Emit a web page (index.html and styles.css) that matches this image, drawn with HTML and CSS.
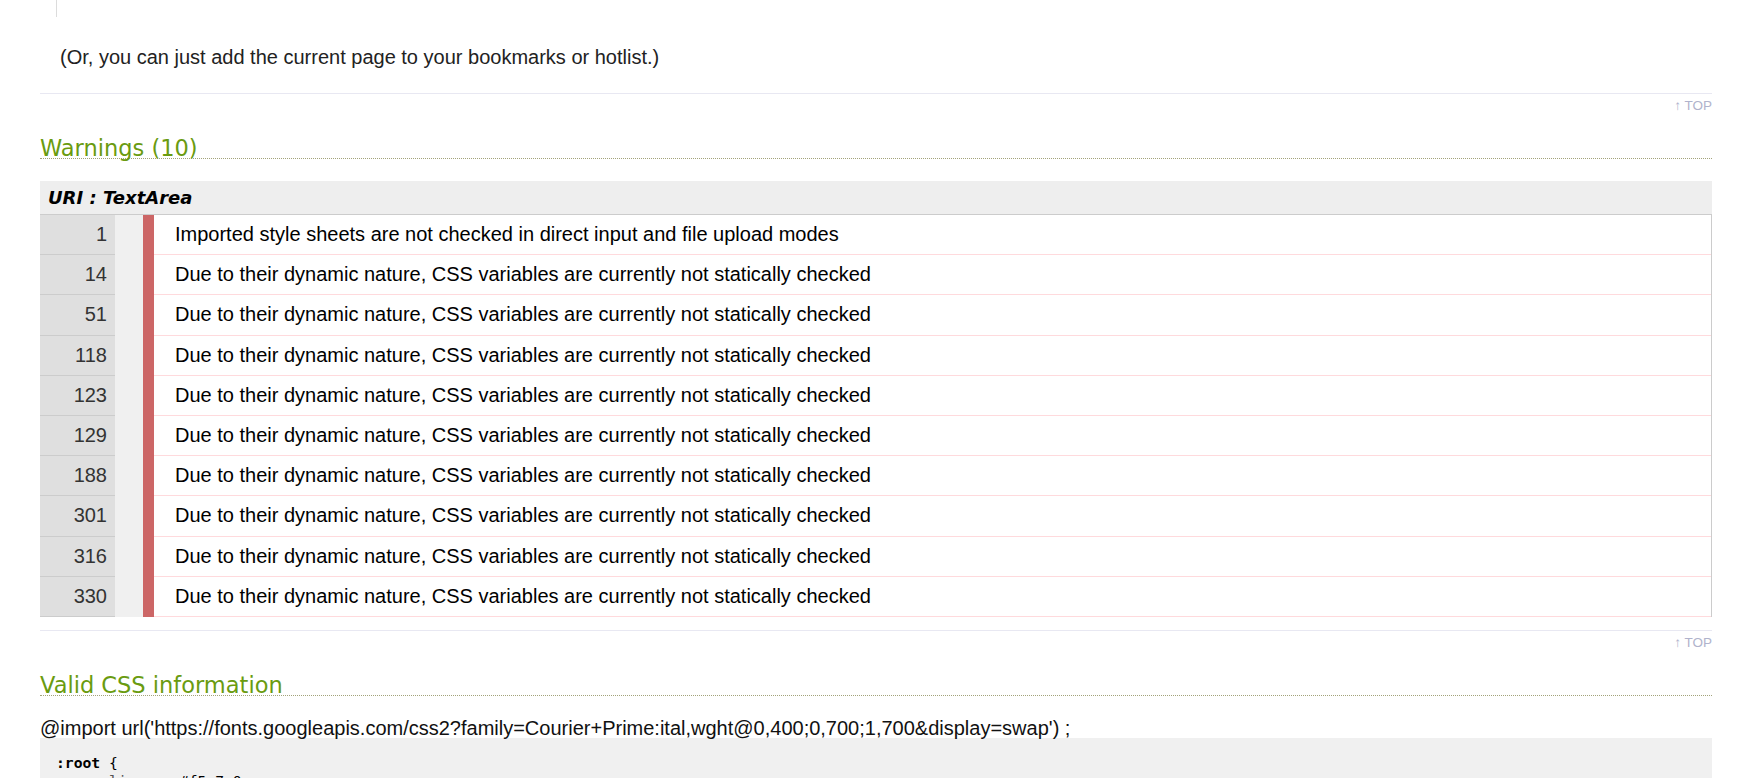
FILE: index.html
```html
<!DOCTYPE html>
<html lang="en">
<head>
<meta charset="utf-8">
<title>W3C CSS Validator results</title>
<link rel="stylesheet" href="styles.css">
</head>
<body>
<div class="page">
  <div class="prev-block"></div>
  <p class="note">(Or, you can just add the current page to your bookmarks or hotlist.)</p>
  <div class="sep"></div>
  <div class="top-link"><a href="#">↑ TOP</a></div>

  <h3 class="section-title">Warnings (10)</h3>
  <div class="uri-head">URI : TextArea</div>
  <table class="results">
    <tbody>
      <tr><td class="ln">1</td><td class="ctx"></td><td class="mark"></td><td class="msg">Imported style sheets are not checked in direct input and file upload modes</td></tr>
      <tr><td class="ln">14</td><td class="ctx"></td><td class="mark"></td><td class="msg">Due to their dynamic nature, CSS variables are currently not statically checked</td></tr>
      <tr><td class="ln">51</td><td class="ctx"></td><td class="mark"></td><td class="msg">Due to their dynamic nature, CSS variables are currently not statically checked</td></tr>
      <tr><td class="ln">118</td><td class="ctx"></td><td class="mark"></td><td class="msg">Due to their dynamic nature, CSS variables are currently not statically checked</td></tr>
      <tr><td class="ln">123</td><td class="ctx"></td><td class="mark"></td><td class="msg">Due to their dynamic nature, CSS variables are currently not statically checked</td></tr>
      <tr><td class="ln">129</td><td class="ctx"></td><td class="mark"></td><td class="msg">Due to their dynamic nature, CSS variables are currently not statically checked</td></tr>
      <tr><td class="ln">188</td><td class="ctx"></td><td class="mark"></td><td class="msg">Due to their dynamic nature, CSS variables are currently not statically checked</td></tr>
      <tr><td class="ln">301</td><td class="ctx"></td><td class="mark"></td><td class="msg">Due to their dynamic nature, CSS variables are currently not statically checked</td></tr>
      <tr><td class="ln">316</td><td class="ctx"></td><td class="mark"></td><td class="msg">Due to their dynamic nature, CSS variables are currently not statically checked</td></tr>
      <tr><td class="ln">330</td><td class="ctx"></td><td class="mark"></td><td class="msg">Due to their dynamic nature, CSS variables are currently not statically checked</td></tr>
    </tbody>
  </table>
  <div class="sep sep-after"></div>
  <div class="top-link"><a href="#">↑ TOP</a></div>

  <h3 class="section-title section-valid">Valid CSS information</h3>
  <p class="import">@import url('https://fonts.googleapis.com/css2?family=Courier+Prime:ital,wght@0,400;0,700;1,700&amp;display=swap') ;</p>
  <pre class="code"><span class="sel">:root</span> {
    <span class="prop">--linen</span> : #f5e7e0;</pre>
</div>
</body>
</html>
```

FILE: styles.css
```css
html, body {
  margin: 0;
  padding: 0;
  background: #fff;
}

body {
  font-family: "Liberation Sans", Arial, sans-serif;
  color: #222;
  overflow: hidden;
}

.page {
  margin: 0 39px 0 40px;
}

.prev-block {
  margin-left: 16px;
  height: 17px;
  border-left: 1px solid #dcdcdc;
}

.note {
  margin: 29px 0 0 0;
  padding-left: 20px;
  font-size: 20px;
  line-height: 23px;
  color: #222;
}

.sep {
  margin-top: 24px;
  height: 1px;
  background: #e8e8f2;
}

.top-link {
  margin-top: 4px;
  text-align: right;
  font-size: 13.5px;
  line-height: 15px;
}

.top-link a {
  color: #b0b3cc;
  text-decoration: none;
}

.section-title {
  margin: 26px 0 0 0;
  font-family: "DejaVu Sans", Verdana, sans-serif;
  font-weight: normal;
  font-size: 22.5px;
  line-height: 19px;
  color: #6a9b10;
  border-bottom: 1px dotted #a3a37a;
}

.uri-head {
  margin-top: 22px;
  height: 33px;
  line-height: 33px;
  padding-left: 8px;
  background: #eeeeee;
  font-family: "DejaVu Sans", Verdana, sans-serif;
  font-weight: bold;
  font-style: italic;
  font-size: 18px;
  color: #000;
}

.results {
  width: 100%;
  border-spacing: 0;
  border-top: 1px solid #cccccc;
  border-right: 1px solid #cccccc;
  font-size: 20px;
}

.results td {
  height: 39.2px;
  padding: 0;
  vertical-align: middle;
}

.results td.ln {
  width: 67px;
  padding-right: 8px;
  text-align: right;
  background: #dfdfdf;
  color: #333;
  border-bottom: 1px solid #cccccc;
}

.results td.ctx {
  width: 28px;
  background: #f0f0f0;
}

.results td.mark {
  width: 11px;
  background: #cc6666;
}

.results td.msg {
  padding-left: 21px;
  color: #000;
  border-bottom: 1px solid #ffdadd;
}

.sep-after {
  margin-top: 13px;
}

.import {
  margin: 22px 0 0 0;
  font-size: 20px;
  line-height: 20px;
  color: #111;
}

.code {
  margin: 0;
  padding: 16px 16px 0 16px;
  height: 60px;
  background: #f0f0f0;
  font-family: "DejaVu Sans Mono", "Liberation Mono", monospace;
  font-size: 14.7px;
  line-height: 18px;
  color: #000;
  overflow: hidden;
}

.code .sel {
  font-weight: bold;
}

.code .prop {
  color: #555;
}
```
